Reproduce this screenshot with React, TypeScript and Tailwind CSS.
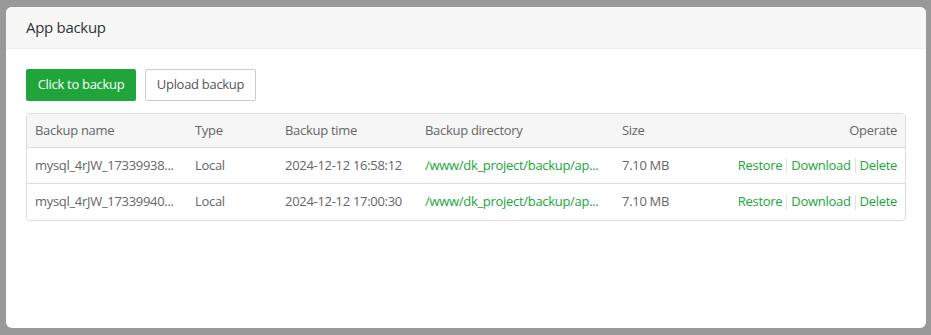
const rows = [
  { name: "mysql_4rJW_17339938...", type: "Local", time: "2024-12-12 16:58:12", dir: "/www/dk_project/backup/ap...", size: "7.10 MB" },
  { name: "mysql_4rJW_17339940...", type: "Local", time: "2024-12-12 17:00:30", dir: "/www/dk_project/backup/ap...", size: "7.10 MB" },
];

const cols = "grid grid-cols-[160px_90px_140px_197px_1fr_auto] items-center pl-[8px] pr-[8px]";

export default function App() {
  return (
    <div
      className="w-[931px] h-[335px] bg-[#999999] pt-[7px] pl-[6px] overflow-hidden tracking-[-0.3px]"
      style={{ fontFamily: '"Open Sans", "Noto Sans", sans-serif' }}
    >
      <div className="w-[920px] h-[321px] bg-white rounded-[6px] overflow-hidden flex flex-col">
        <div className="h-[42px] shrink-0 bg-[#f7f7f7] border-b border-[#eeeeee] flex items-center px-5 text-[15px] text-[#333]">
          App backup
        </div>
        <div className="px-5 pt-[20px]">
          <div className="flex gap-[9px]">
            <button className="h-[32px] w-[110px] rounded-[2px] bg-[#20a53a] text-white text-[13px]">Click to backup</button>
            <button className="h-[32px] w-[111px] rounded-[2px] border border-[#cccccc] bg-white text-[#555] text-[13px]">Upload backup</button>
          </div>
          <div className="mt-[12px] border border-[#dddddd] rounded-[4px] overflow-hidden text-[13px] text-[#666]">
            <div className={`${cols} h-[34px] bg-[#f6f6f6] border-b border-[#dddddd]`}>
              <span>Backup name</span>
              <span>Type</span>
              <span>Backup time</span>
              <span>Backup directory</span>
              <span>Size</span>
              <span className="text-right">Operate</span>
            </div>
            {rows.map((r, i) => (
              <div key={i} className={`${cols} h-[36px] ${i === 0 ? "border-b border-[#dddddd]" : ""}`}>
                <span>{r.name}</span>
                <span>{r.type}</span>
                <span>{r.time}</span>
                <span className="text-[#20a53a]">{r.dir}</span>
                <span>{r.size}</span>
                <span className="flex items-center text-[#20a53a]">
                  Restore
                  <span className="mx-[4px] h-[15px] w-px bg-[#e2e2e2]" />
                  Download
                  <span className="mx-[4px] h-[15px] w-px bg-[#e2e2e2]" />
                  Delete
                </span>
              </div>
            ))}
          </div>
        </div>
      </div>
    </div>
  );
}
